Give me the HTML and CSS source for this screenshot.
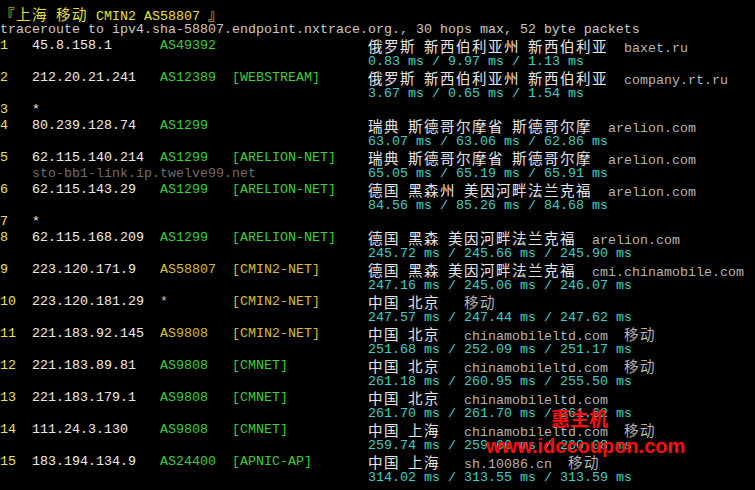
FILE: index.html
```html
<!DOCTYPE html>
<html lang="zh-CN">
<head>
  <meta charset="UTF-8" />
  <meta name="viewport" content="width=device-width, initial-scale=1.0"/>
  <title>nexttrace</title>
  <link rel="stylesheet" href="styles.css">
</head>
<body>
  <div id="term">
    <div class="ln"><span class="y"><span class="c">『上海</span> <span class="c">移动</span> CMIN2 AS58807 <span class="c">』</span></span></div>
    <div class="ln"><span class="t">traceroute to ipv4.sha-58807.endpoint.nxtrace.org., 30 hops max, 52 byte packets</span></div>

    <!-- hop 1 -->
    <div class="ln"><span class="l"><span class="n">1</span>   <span class="w">45.8.158.1</span>      <span class="g">AS49392</span></span><span class="r"><span class="c">俄罗斯</span> <span class="c">新西伯利亚州</span> <span class="c">新西伯利亚</span>  <span class="h">baxet.ru</span></span></div>
    <div class="ln"><span class="l"></span><span class="r m">0.83 ms / 9.97 ms / 1.13 ms</span></div>
    <!-- hop 2 -->
    <div class="ln"><span class="l"><span class="n">2</span>   <span class="w">212.20.21.241</span>   <span class="g">AS12389</span>  <span class="g">[WEBSTREAM]</span></span><span class="r"><span class="c">俄罗斯</span> <span class="c">新西伯利亚州</span> <span class="c">新西伯利亚</span>  <span class="h">company.rt.ru</span></span></div>
    <div class="ln"><span class="l"></span><span class="r m">3.67 ms / 0.65 ms / 1.54 ms</span></div>
    <!-- hop 3 -->
    <div class="ln"><span class="l"><span class="n">3</span>   <span class="w">*</span></span></div>
    <!-- hop 4 -->
    <div class="ln"><span class="l"><span class="n">4</span>   <span class="w">80.239.128.74</span>   <span class="g">AS1299</span></span><span class="r"><span class="c">瑞典</span> <span class="c">斯德哥尔摩省</span> <span class="c">斯德哥尔摩</span>  <span class="h">arelion.com</span></span></div>
    <div class="ln"><span class="l"></span><span class="r m">63.07 ms / 63.06 ms / 62.86 ms</span></div>
    <!-- hop 5 -->
    <div class="ln"><span class="l"><span class="n">5</span>   <span class="w">62.115.140.214</span>  <span class="g">AS1299</span>   <span class="g">[ARELION-NET]</span></span><span class="r"><span class="c">瑞典</span> <span class="c">斯德哥尔摩省</span> <span class="c">斯德哥尔摩</span>  <span class="h">arelion.com</span></span></div>
    <div class="ln"><span class="l">    <span class="d">sto-bb1-link.ip.twelve99.net</span></span><span class="r m">65.05 ms / 65.19 ms / 65.91 ms</span></div>
    <!-- hop 6 -->
    <div class="ln"><span class="l"><span class="n">6</span>   <span class="w">62.115.143.29</span>   <span class="g">AS1299</span>   <span class="g">[ARELION-NET]</span></span><span class="r"><span class="c">德国</span> <span class="c">黑森州</span> <span class="c">美因河畔法兰克福</span>  <span class="h">arelion.com</span></span></div>
    <div class="ln"><span class="l"></span><span class="r m">84.56 ms / 85.26 ms / 84.68 ms</span></div>
    <!-- hop 7 -->
    <div class="ln"><span class="l"><span class="n">7</span>   <span class="w">*</span></span></div>
    <!-- hop 8 -->
    <div class="ln"><span class="l"><span class="n">8</span>   <span class="w">62.115.168.209</span>  <span class="g">AS1299</span>   <span class="g">[ARELION-NET]</span></span><span class="r"><span class="c">德国</span> <span class="c">黑森</span> <span class="c">美因河畔法兰克福</span>  <span class="h">arelion.com</span></span></div>
    <div class="ln"><span class="l"></span><span class="r m">245.72 ms / 245.66 ms / 245.90 ms</span></div>
    <!-- hop 9 -->
    <div class="ln"><span class="l"><span class="n">9</span>   <span class="w">223.120.171.9</span>   <span class="o">AS58807</span>  <span class="o">[CMIN2-NET]</span></span><span class="r"><span class="c">德国</span> <span class="c">黑森</span> <span class="c">美因河畔法兰克福</span>  <span class="h">cmi.chinamobile.com</span></span></div>
    <div class="ln"><span class="l"></span><span class="r m">247.16 ms / 245.06 ms / 246.07 ms</span></div>
    <!-- hop 10 -->
    <div class="ln"><span class="l"><span class="n">10</span>  <span class="w">223.120.181.29</span>  <span class="s">*</span>        <span class="o">[CMIN2-NET]</span></span><span class="r"><span class="c">中国</span> <span class="c">北京</span>   <span class="c h">移动</span></span></div>
    <div class="ln"><span class="l"></span><span class="r m">247.57 ms / 247.44 ms / 247.62 ms</span></div>
    <!-- hop 11 -->
    <div class="ln"><span class="l"><span class="n">11</span>  <span class="w">221.183.92.145</span>  <span class="o">AS9808</span>   <span class="o">[CMIN2-NET]</span></span><span class="r"><span class="c">中国</span> <span class="c">北京</span>   <span class="h">chinamobileltd.com</span>  <span class="c h">移动</span></span></div>
    <div class="ln"><span class="l"></span><span class="r m">251.68 ms / 252.09 ms / 251.17 ms</span></div>
    <!-- hop 12 -->
    <div class="ln"><span class="l"><span class="n">12</span>  <span class="w">221.183.89.81</span>   <span class="g">AS9808</span>   <span class="g">[CMNET]</span></span><span class="r"><span class="c">中国</span> <span class="c">北京</span>   <span class="h">chinamobileltd.com</span>  <span class="c h">移动</span></span></div>
    <div class="ln"><span class="l"></span><span class="r m">261.18 ms / 260.95 ms / 255.50 ms</span></div>
    <!-- hop 13 -->
    <div class="ln"><span class="l"><span class="n">13</span>  <span class="w">221.183.179.1</span>   <span class="g">AS9808</span>   <span class="g">[CMNET]</span></span><span class="r"><span class="c">中国</span> <span class="c">北京</span>   <span class="h">chinamobileltd.com</span></span></div>
    <div class="ln"><span class="l"></span><span class="r m">261.70 ms / 261.70 ms / 261.62 ms</span></div>
    <!-- hop 14 -->
    <div class="ln"><span class="l"><span class="n">14</span>  <span class="w">111.24.3.130</span>    <span class="g">AS9808</span>   <span class="g">[CMNET]</span></span><span class="r"><span class="c">中国</span> <span class="c">上海</span>   <span class="h">chinamobileltd.com</span>  <span class="c h">移动</span></span></div>
    <div class="ln"><span class="l"></span><span class="r m">259.74 ms / 259.66 ms / 260.08 ms</span></div>
    <!-- hop 15 -->
    <div class="ln"><span class="l"><span class="n">15</span>  <span class="w">183.194.134.9</span>   <span class="g">AS24400</span>  <span class="g">[APNIC-AP]</span></span><span class="r"><span class="c">中国</span> <span class="c">上海</span>   <span class="h">sh.10086.cn</span>  <span class="c h">移动</span></span></div>
    <div class="ln"><span class="l"></span><span class="r m">314.02 ms / 313.55 ms / 313.59 ms</span></div>
  </div>

  <!-- 水印 -->
  <div class="wm wm-cn">惠主机</div>
  <div class="wm wm-url">www.idccoupon.com</div>
</body>
</html>
```

FILE: styles.css
```css
body {
  margin: 0;
  background-color: #000;
  overflow: hidden;
}
#term {
  padding-top: 6px;
  font-family: "Liberation Mono", monospace;
  font-size: 13.33px;
  line-height: 16px;
  color: #e6e6e6;
}
.ln {
  display: flex;
  height: 16px;
  white-space: pre;
}
.l {
  flex: none;
  width: 368px;
}
.r {
  flex: none;
}
/* 中文按双宽格子排 */
.c {
  font-family: "Noto Sans CJK SC", sans-serif;
  font-size: 14.5px;
  letter-spacing: 1.5px;
}
.y { color: #e8e030; }
.t { color: #c8c8c8; }
.n { color: #ece050; }
.w { color: #f0f0f0; }
.g { color: #3ccd3c; }
.o { color: #d6bf2a; }
.s { color: #c8c8c8; }
.h { color: #b4b4b4; }
.d { color: #6e6e6e; }
.m { color: #3fcfcf; }

.wm {
  position: absolute;
  color: #ff0d0d;
  font-weight: bold;
  white-space: nowrap;
}
.wm-cn {
  left: 551px;
  top: 407px;
  font-family: "Noto Sans CJK SC", sans-serif;
  font-size: 19px;
  line-height: 22px;
}
.wm-url {
  left: 486px;
  top: 436px;
  font-family: "Liberation Sans", Arial, sans-serif;
  font-size: 20px;
  line-height: 20px;
}
```
